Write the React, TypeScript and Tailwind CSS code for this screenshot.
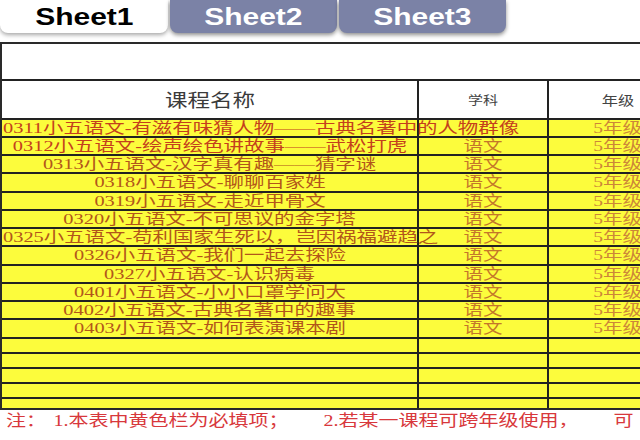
const rows = [
  { name: "0311小五语文-有滋有味猜人物——古典名著中的人物群像", left: true, red: true, subject: "" },
  { name: "0312小五语文-绘声绘色讲故事——武松打虎", red: true },
  { name: "0313小五语文-汉字真有趣——猜字谜" },
  { name: "0318小五语文-聊聊百家姓" },
  { name: "0319小五语文-走近甲骨文" },
  { name: "0320小五语文-不可思议的金字塔" },
  { name: "0325小五语文-苟利国家生死以，岂因祸福避趋之", left: true },
  { name: "0326小五语文-我们一起去探险" },
  { name: "0327小五语文-认识病毒" },
  { name: "0401小五语文-小小口罩学问大" },
  { name: "0402小五语文-古典名著中的趣事" },
  { name: "0403小五语文-如何表演课本剧" },
];

const emptyRows = ["h-[15px]", "h-[15px]", "h-[15px]", "h-[15px]", "h-[11px]"];

function Tab({ label, active }: { label: string; active?: boolean }) {
  return (
    <div
      className={
        active
          ? "w-[168px] h-[33px] shrink-0 rounded-b-lg bg-white shadow-[0_2px_4px_rgba(0,0,0,0.35)] flex items-center justify-center"
          : "w-[167px] h-[33px] shrink-0 rounded-b-lg bg-[#7b82a6] shadow-[0_2px_4px_rgba(0,0,0,0.45)] flex items-center justify-center"
      }
    >
      <span
        className={
          active
            ? "inline-block scale-x-125 text-[24px] font-bold text-black font-['Liberation_Sans',sans-serif] leading-none"
            : "inline-block scale-x-125 text-[24px] font-bold text-white font-['Liberation_Sans',sans-serif] leading-none"
        }
      >
        {label}
      </span>
    </div>
  );
}

export default function App() {
  const font = "font-['Liberation_Serif','Noto_Sans_CJK_SC',serif]";
  return (
    <div className="w-[640px] h-[440px] bg-white overflow-hidden">
      <div className="flex gap-[2px]">
        <Tab label="Sheet1" active />
        <Tab label="Sheet2" />
        <Tab label="Sheet3" />
      </div>

      <div className={`mt-[9px] w-[700px] border-t-2 border-l-2 border-b-2 border-[#2a2a2a] ${font}`}>
        {/* blank title row */}
        <div className="h-[35px] bg-white" />

        {/* header */}
        <div className="flex h-[39px] border-t-2 border-[#222] bg-white">
          <div className="w-[417px] shrink-0 border-r-2 border-[#222] flex items-center justify-center">
            <span className="inline-block scale-x-125 text-[18px] text-[#3a3a3a] font-['Noto_Sans_CJK_SC',sans-serif]">课程名称</span>
          </div>
          <div className="w-[130px] shrink-0 border-r-2 border-[#222] flex items-center justify-center">
            <span className="inline-block scale-x-125 text-[12px] text-[#444] font-['Noto_Sans_CJK_SC',sans-serif]">学科</span>
          </div>
          <div className="w-[138px] shrink-0 flex items-center justify-center">
            <span className="inline-block scale-x-125 text-[13px] text-[#444] font-['Noto_Sans_CJK_SC',sans-serif]">年级</span>
          </div>
        </div>

        {/* data rows */}
        {rows.map((r, i) => (
          <div
            key={r.name}
            className={`flex border-t-2 border-[#222] bg-[#fcfc3c] ${i % 4 === 3 ? "h-[19px]" : "h-[18px]"}`}
          >
            <div
              className={`w-[417px] shrink-0 border-r-2 border-[#222] flex items-center relative z-10 ${r.left ? "justify-start pl-[1px]" : "justify-center"}`}
            >
              <span
                className={`inline-block whitespace-nowrap scale-x-[1.36] text-[15px] leading-[15px] ${r.left ? "origin-left" : ""} ${r.red ? "text-[#c4401c]" : "text-[#b2561a]"}`}
              >
                {r.name}
              </span>
            </div>
            <div className="w-[130px] shrink-0 border-r-2 border-[#222] flex items-center justify-center">
              <span className="inline-block scale-x-[1.3] text-[15px] leading-[15px] text-[#c4762a]">
                {r.subject ?? "语文"}
              </span>
            </div>
            <div className="w-[138px] shrink-0 flex items-center justify-center">
              <span className="inline-block scale-x-[1.3] text-[15px] leading-[15px] text-[#cc8638]">5年级</span>
            </div>
          </div>
        ))}

        {/* empty yellow rows */}
        {emptyRows.map((h, i) => (
          <div key={i} className={`flex border-t-2 border-[#222] bg-[#fcfc3c] ${h}`}>
            <div className="w-[417px] shrink-0 border-r-2 border-[#222]" />
            <div className="w-[130px] shrink-0 border-r-2 border-[#222]" />
            <div className="w-[138px] shrink-0" />
          </div>
        ))}
      </div>

      <div className={`h-[22px] pl-[6px] flex items-center whitespace-nowrap ${font}`}>
        <span className="inline-block origin-left scale-x-125 text-[16px] leading-none text-[#d8383c]">
          注：<span className="ml-[6px]">1.本表中黄色栏为必填项；</span>
          <span className="ml-[28px]">2.若某一课程可跨年级使用，</span>
          <span className="ml-[28px]">可</span>
        </span>
      </div>
    </div>
  );
}
